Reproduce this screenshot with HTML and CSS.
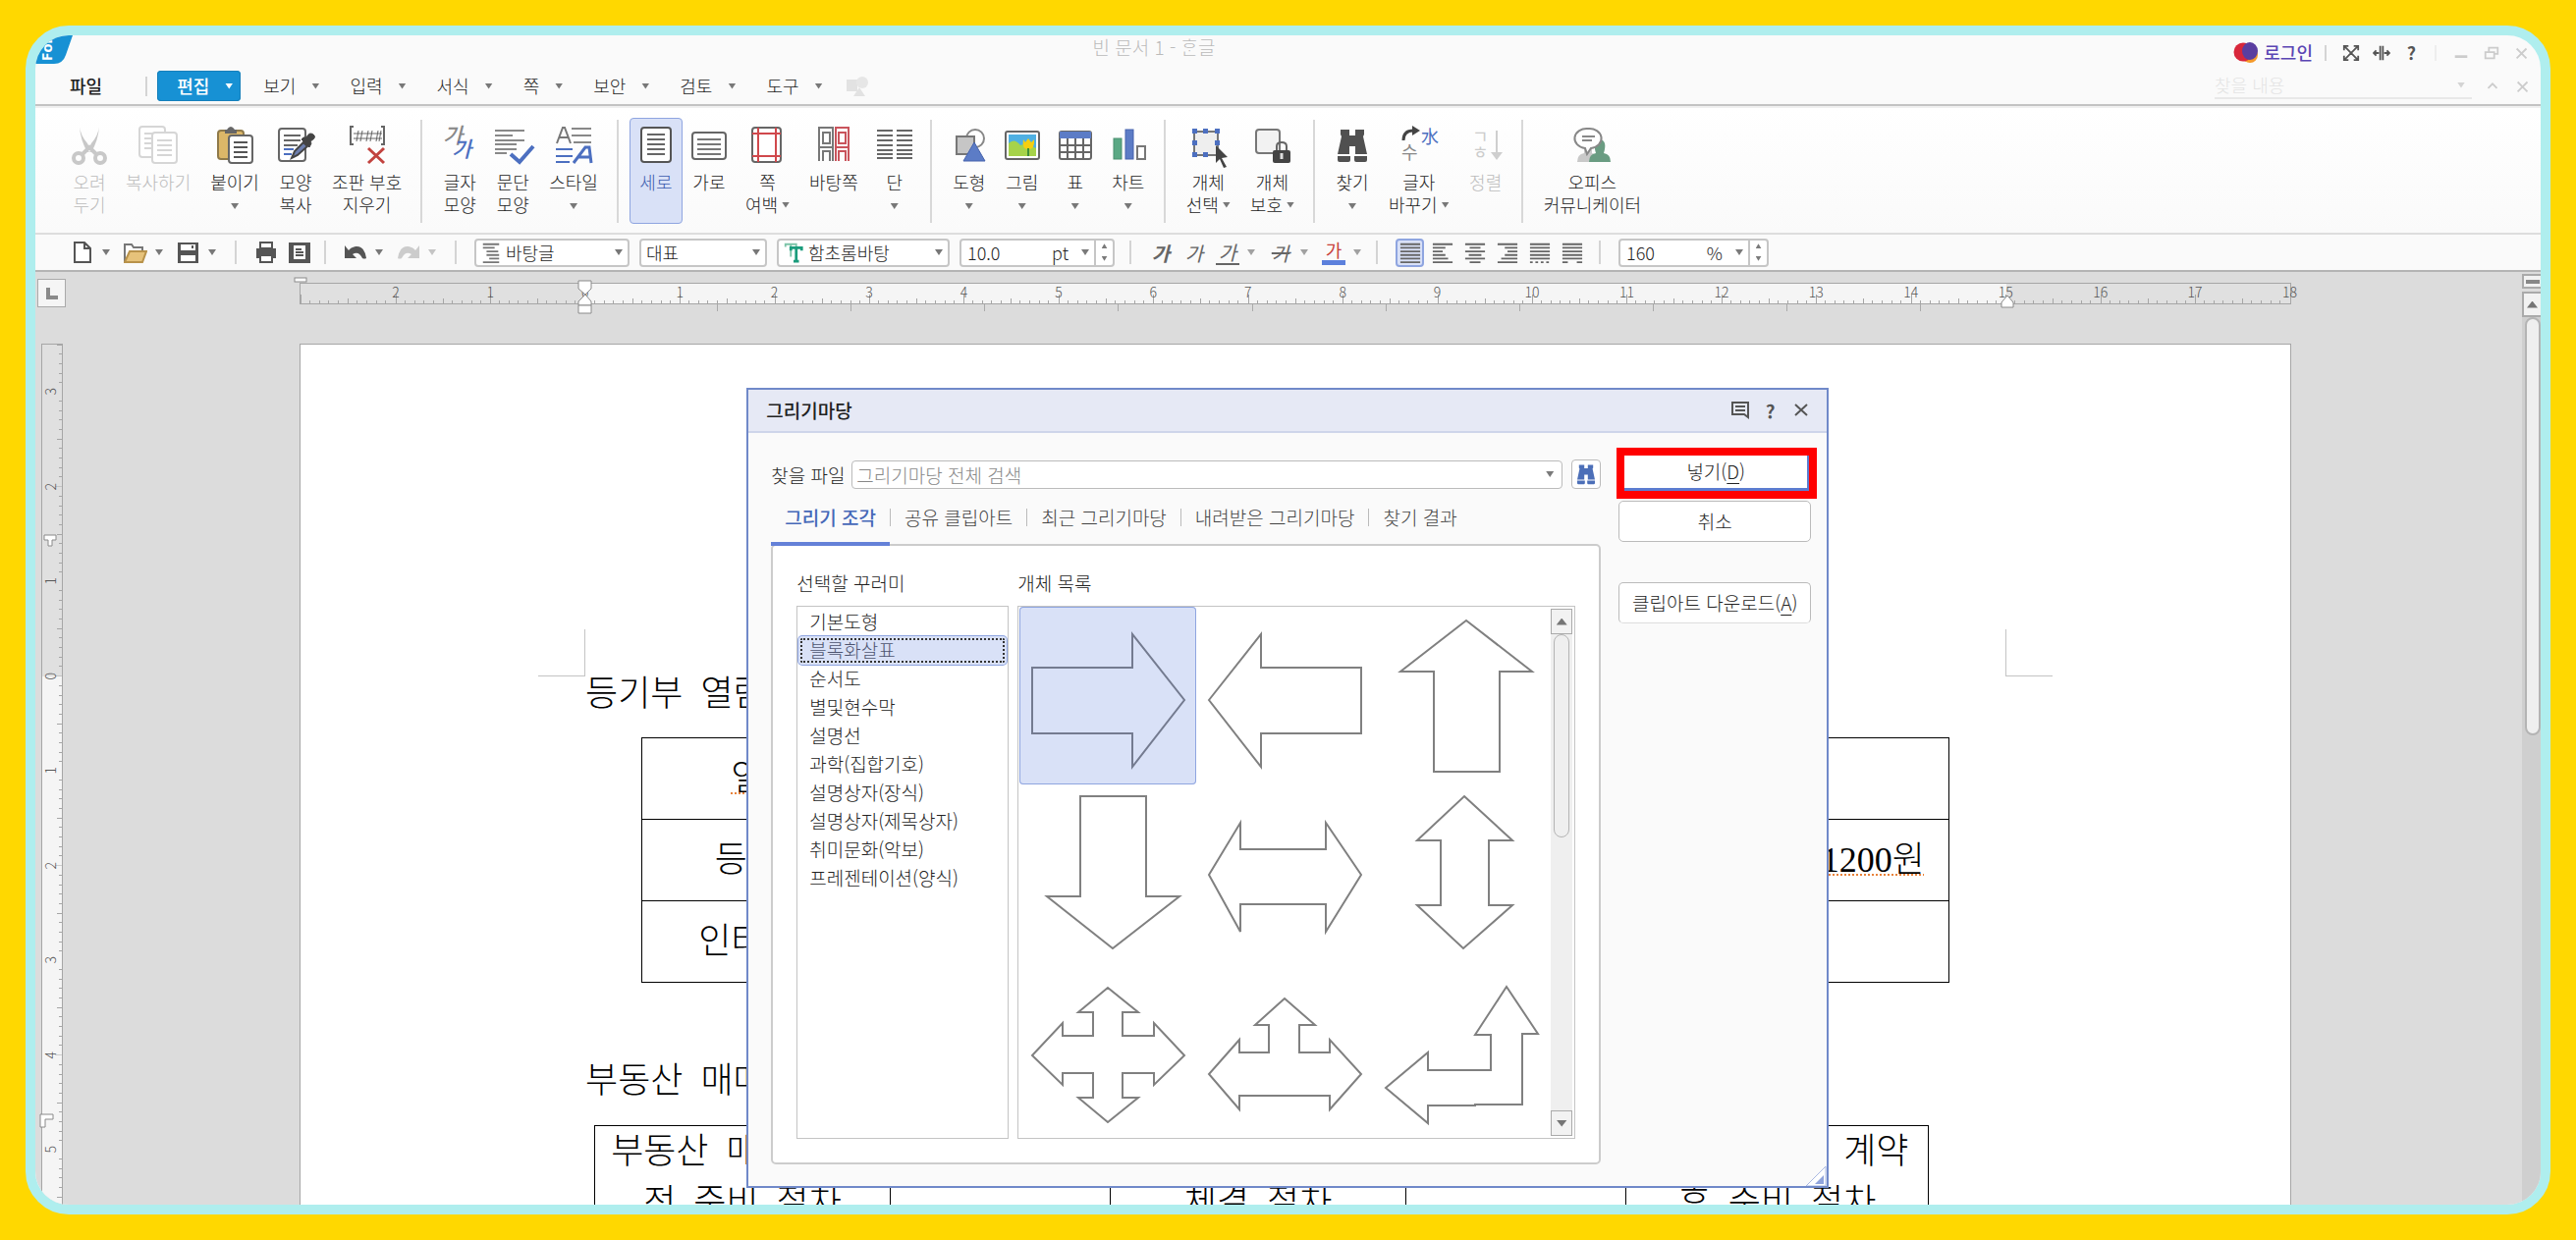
FILE: index.html
```html
<!DOCTYPE html>
<html lang="ko">
<head>
<meta charset="utf-8">
<title>빈 문서 1 - ᄒᆞᆫ글</title>
<link rel="stylesheet" href="styles.css">
</head>
<body>
<svg class="defs" aria-hidden="true">
  <symbol id="cm-x">
    <g stroke="#a6a6a6" shape-rendering="crispEdges">
      <line x1="0" x2="0" y1="11" y2="22"/>
      <line x1="10%" x2="10%" y1="17" y2="22"/><line x1="20%" x2="20%" y1="17" y2="22"/>
      <line x1="30%" x2="30%" y1="17" y2="22"/><line x1="40%" x2="40%" y1="17" y2="22"/>
      <line x1="50%" x2="50%" y1="15" y2="22"/>
      <line x1="60%" x2="60%" y1="17" y2="22"/><line x1="70%" x2="70%" y1="17" y2="22"/>
      <line x1="80%" x2="80%" y1="17" y2="22"/><line x1="90%" x2="90%" y1="17" y2="22"/>
    </g>
  </symbol>
  <symbol id="cm-y">
    <g stroke="#a6a6a6" shape-rendering="crispEdges">
      <line y1="10%" y2="10%" x1="18" x2="22"/><line y1="20%" y2="20%" x1="18" x2="22"/>
      <line y1="30%" y2="30%" x1="18" x2="22"/><line y1="40%" y2="40%" x1="18" x2="22"/>
      <line y1="50%" y2="50%" x1="16" x2="22"/>
      <line y1="60%" y2="60%" x1="18" x2="22"/><line y1="70%" y2="70%" x1="18" x2="22"/>
      <line y1="80%" y2="80%" x1="18" x2="22"/><line y1="90%" y2="90%" x1="18" x2="22"/>
      <line y1="100%" y2="100%" x1="14" x2="22"/>
    </g>
  </symbol>
  <symbol id="binoculars" viewBox="0 0 36 40">
    <path d="M6 4h9v6h6V4h9v5l-1 2 4 18H21v-8h-6v8H3l4-18-1-2zM3 31h13v4q0 2-2 2H5q-2 0-2-2zM20 31h13v4q0 2-2 2h-9q-2 0-2-2z" fill="currentColor"/>
  </symbol>
</svg>

<div class="app">
  <header class="header">
    <div class="titlebar">
      <svg class="badge" viewBox="0 0 38 29"><path d="M0 0h38l-7 20q-3 9-12 9H0z" fill="#1791d4"/><text class="badge-text" transform="translate(17 26) rotate(-90)">For</text></svg>
      <h1 class="doc-title">빈 문서 1 - ᄒᆞᆫ글</h1>
      <div class="window-tools">
        <a class="login" href="#login"><svg width="26" height="22" viewBox="0 0 26 22"><circle cx="17" cy="13" r="8" fill="#f59a2a"/><circle cx="10" cy="10" r="9.500" fill="#d8273b"/><ellipse cx="17" cy="9" rx="8" ry="9" fill="#5a3ea0"/></svg>로그인</a>
        <i class="bar"></i>
        <button class="mini dark" aria-label="전체 화면"><svg viewBox="0 0 20 20"><path d="M3 3l14 14M17 3L3 17M2 7V2h5M13 2h5v5M18 13v5h-5M7 18H2v-5" /></svg></button>
        <button class="mini dark" aria-label="폭 맞춤"><svg viewBox="0 0 20 20"><path d="M8.500 2v16M11.500 2v16M1 10h6M13 10h6M4 7l-3 3 3 3M16 7l3 3-3 3"/></svg></button>
        <button class="mini dark" aria-label="도움말"><b>?</b></button>
        <i class="bar pale"></i>
        <button class="mini" aria-label="최소화"><svg viewBox="0 0 20 20"><path d="M3 14h14" stroke-width="3"/></svg></button>
        <button class="mini" aria-label="이전 크기로"><svg viewBox="0 0 20 20"><path d="M3 9h10v7H3zM7 8V4h10v7h-3" stroke-width="2"/></svg></button>
        <button class="mini" aria-label="닫기"><svg viewBox="0 0 20 20"><path d="M4 5l11 11M15 5L4 16" stroke-width="2"/></svg></button>
      </div>
    </div>
    <nav class="menubar">
      <button class="menu file">파일</button>
      <i class="bar"></i>
      <button class="menu active">편집<i class="caret"></i></button>
      <button class="menu">보기<i class="caret"></i></button>
      <button class="menu">입력<i class="caret"></i></button>
      <button class="menu">서식<i class="caret"></i></button>
      <button class="menu">쪽<i class="caret"></i></button>
      <button class="menu">보안<i class="caret"></i></button>
      <button class="menu">검토<i class="caret"></i></button>
      <button class="menu">도구<i class="caret"></i></button>
      <svg class="ghost" width="24" height="22" viewBox="0 0 24 22"><path d="M1 4h11v12H1zM14 12l6 9H8z" fill="#e2e2e2"/><circle cx="17" cy="7" r="6" fill="#e6e6e6"/></svg>
      <div class="find"><input aria-label="찾을 내용" placeholder="찾을 내용"><i class="caret"></i></div>
      <button class="mini" aria-label="접기"><svg viewBox="0 0 20 20"><path d="M5 12l5-5 5 5" stroke-width="2"/></svg></button>
      <button class="mini" aria-label="문서 닫기"><svg viewBox="0 0 20 20"><path d="M4 5l11 11M15 5L4 16" stroke-width="2"/></svg></button>
    </nav>
  </header>

  <section class="ribbon">
    <div class="group">
      <button class="cmd off"><svg viewBox="0 0 36 40"><path d="M8 1q1 9 8 17l4 8-4 1Q9 15 8 1zM28 1q-1 9-8 17l-4 8 4 1Q27 15 28 1z" fill="#c8c8c8"/><g fill="none" stroke="#c8c8c8" stroke-width="4"><circle cx="7" cy="33" r="5"/><circle cx="29" cy="33" r="5"/><path d="M11 29l7-7 7 7"/></g></svg><span>오려</span><span>두기</span></button>
      <button class="cmd off"><svg viewBox="0 0 36 40"><g fill="#fff" stroke="#d6d6d6" stroke-width="2"><rect x="-1" y="1" width="26" height="31" rx="3"/><path d="M4 8h10M4 13h8M4 18h8M4 23h8"/><rect x="12" y="7" width="25" height="31" rx="3"/><path d="M17 15h15M17 20h15M17 25h15M17 30h15"/></g></svg><span>복사하기</span></button>
      <button class="cmd"><svg viewBox="0 0 36 40"><rect x="1" y="5" width="26" height="29" rx="3" fill="#dcb768" stroke="#8f7a4a" stroke-width="2"/><path d="M8 4h2q4-6 8 0h2v4H8z" fill="#666"/><rect x="12" y="10" width="24" height="28" rx="3" fill="#fff" stroke="#666" stroke-width="2"/><path d="M17 17h14M17 22h14M17 27h14M17 32h14" stroke="#555" stroke-width="2"/></svg><span>붙이기</span><i class="caret"></i></button>
      <button class="cmd"><svg viewBox="0 0 36 40"><rect x="1" y="3" width="27" height="33" rx="3" fill="#fff" stroke="#666" stroke-width="2"/><path d="M6 10h17M6 15h17M6 20h14" stroke="#666" stroke-width="2"/><path d="M6 24h10M6 29h8" stroke="#4c6fc0" stroke-width="2"/><path d="M14 33l3-7 9-9 4 4-10 9z" fill="#6d7fae" stroke="#444" stroke-width="2"/><path d="M24 14l8 8 2-4-1-2q7-4 3-7t-7 3l-3 0z" fill="#444" stroke="#444"/></svg><span>모양</span><span>복사</span></button>
      <button class="cmd"><svg viewBox="0 0 36 40"><g fill="none" stroke="#666" stroke-width="2"><path d="M4 1H1v18h3M32 1h3v18h-3"/><path d="M4 8h29M4 13h29M9 5L7 16M13 5l-2 11M19 5l-2 11M23 5l-2 11M29 5l-2 11M32 5l-2 11" stroke-width="1"/></g><path d="M19 23l16 15M35 23L19 38" stroke="#c2433f" stroke-width="3"/></svg><span>조판 부호</span><span>지우기</span></button>
    </div>
    <div class="group">
      <button class="cmd"><svg viewBox="0 0 36 40"><text class="ic-ga grey" x="1" y="18">가</text><text class="ic-ga blue" x="10" y="32">가</text></svg><span>글자</span><span>모양</span></button>
      <button class="cmd"><svg viewBox="0 0 36 40"><path d="M0 5h30M0 10h18M0 15h30M0 19h22M0 24h22M0 28h12" stroke="#888" stroke-width="2"/><path d="M16 29l9 8 14-16" fill="none" stroke="#4c6fc0" stroke-width="4"/></svg><span>문단</span><span>모양</span></button>
      <button class="cmd"><svg viewBox="0 0 36 40"><path d="M1 18L7 2h2l6 16M4 12h9" fill="none" stroke="#777" stroke-width="2"/><path d="M16 3h20M16 10h20M18 17h18" stroke="#888" stroke-width="2"/><path d="M0 24h17M0 31h17M0 37h14" stroke="#4c6fc0" stroke-width="2"/><path d="M18 38l12-16h4l2 16M23 32h12" fill="none" stroke="#4c6fc0" stroke-width="3"/></svg><span>스타일</span><i class="caret"></i></button>
    </div>
    <div class="group">
      <button class="cmd on"><svg viewBox="0 0 36 40"><rect x="3" y="2" width="30" height="35" rx="3" fill="#fff" stroke="#555" stroke-width="2"/><path d="M9 9h18M9 14h18M9 19h18M9 24h18M9 29h18" stroke="#666" stroke-width="2"/></svg><span>세로</span></button>
      <button class="cmd"><svg viewBox="0 0 36 40"><rect x="1" y="7" width="34" height="27" rx="3" fill="#fff" stroke="#666" stroke-width="2"/><path d="M6 14h24M6 19h24M6 24h24M6 29h24" stroke="#777" stroke-width="2"/></svg><span>가로</span></button>
      <button class="cmd"><svg viewBox="0 0 36 40"><rect x="3" y="2" width="29" height="35" rx="3" fill="#fff" stroke="#666" stroke-width="2"/><path d="M9 2v35M27 2v35M3 8h29M3 31h29" stroke="#d0484c" stroke-width="2"/></svg><span>쪽</span><span>여백<i class="caret"></i></span></button>
      <button class="cmd"><svg viewBox="0 0 36 40"><g fill="none" stroke="#777" stroke-width="2"><path d="M3 36V2h14v34M7 7h7v11H7zM3 22h14M7 36V26h7v10"/><path d="M20 36V2h13v34M23 7h7v11h-7zM20 22h13M23 36V26h7v10" stroke="#c9545c"/></g></svg><span>바탕쪽</span></button>
      <button class="cmd"><svg viewBox="0 0 36 40"><path d="M0 5h16M20 5h16M0 10h16M20 10h16M0 15h16M20 15h16M0 20h16M20 20h16M0 25h16M20 25h16M0 29h16M20 29h16M0 33h16M20 33h16" stroke="#666" stroke-width="2"/></svg><span>단</span><i class="caret"></i></button>
    </div>
    <div class="group">
      <button class="cmd"><svg viewBox="0 0 36 40"><circle cx="24" cy="13" r="9" fill="#fff" stroke="#888" stroke-width="2"/><rect x="5" y="11" width="18" height="18" fill="#c6c6c6" stroke="#777" stroke-width="2"/><path d="M23 17l11 19H12z" fill="#5c7cc6" stroke="#4663ad"/></svg><span>도형</span><i class="caret"></i></button>
      <button class="cmd"><svg viewBox="0 0 36 40"><rect x="1" y="6" width="34" height="28" rx="2" fill="#fff" stroke="#666" stroke-width="2"/><path d="M4 9h28v22H4z" fill="#4fb0e2"/><path d="M4 18q6-6 12 2l6-2 10 5v8H4z" fill="#a6d34a"/><path d="M19 14l2 3 3-4 3 4 3-3q1 10-6 10t-5-10z" fill="#f6cf10"/><path d="M24 23v8" stroke="#3e8e37" stroke-width="2"/></svg><span>그림</span><i class="caret"></i></button>
      <button class="cmd"><svg viewBox="0 0 36 40"><rect x="2" y="6" width="32" height="28" rx="2" fill="#fff" stroke="#666" stroke-width="2"/><path d="M2 6h32v7H2z" fill="#5c7cc6"/><path d="M2 20h32M2 27h32M10 13v21M18 13v21M26 13v21" stroke="#666" stroke-width="2"/></svg><span>표</span><i class="caret"></i></button>
      <button class="cmd"><svg viewBox="0 0 36 40"><rect x="3" y="13" width="8" height="21" fill="#5aa884" stroke="#4b8f70"/><rect x="15" y="4" width="8" height="30" fill="#5c7cc6" stroke="#4663ad"/><rect x="27" y="21" width="8" height="13" fill="#fff" stroke="#777" stroke-width="2"/></svg><span>차트</span><i class="caret"></i></button>
    </div>
    <div class="group">
      <button class="cmd"><svg viewBox="0 0 36 40"><rect x="4" y="6" width="24" height="24" fill="#eee" stroke="#777" stroke-width="2"/><g fill="#4c6fc0"><path d="M2 3h5v5H2zM13 3h5v5h-5zM25 3h5v5h-5zM2 15h5v5H2zM25 15h5v5h-5zM2 27h5v5H2zM13 27h5v5h-5z"/></g><path d="M26 20l12 12-6 1 5 9-3 1-4-9-4 4z" fill="#444"/></svg><span>개체</span><span>선택<i class="caret"></i></span></button>
      <button class="cmd"><svg viewBox="0 0 36 40"><rect x="2" y="4" width="24" height="24" rx="3" fill="#f2f2f2" stroke="#777" stroke-width="2"/><path d="M23 26v-5q0-4 5-4t5 4v5" fill="none" stroke="#666" stroke-width="2"/><rect x="19" y="25" width="18" height="13" rx="2" fill="#444"/><path d="M28 28v6" stroke="#ddd" stroke-width="3"/></svg><span>개체</span><span>보호<i class="caret"></i></span></button>
    </div>
    <div class="group">
      <button class="cmd"><svg class="bino"><use href="#binoculars"/></svg><span>찾기</span><i class="caret"></i></button>
      <button class="cmd"><svg viewBox="0 0 36 40"><path d="M2 15q0-10 10-10" fill="none" stroke="#444" stroke-width="3"/><path d="M11 0l8 5-8 5z" fill="#444"/><text class="ic-small blue" x="20" y="18">水</text><text class="ic-small grey" x="0" y="34">수</text></svg><span>글자</span><span>바꾸기<i class="caret"></i></span></button>
      <button class="cmd off"><svg viewBox="0 0 36 40"><text class="ic-small faint" x="4" y="18">ㄱ</text><text class="ic-small faint" x="4" y="34">ㅎ</text><path d="M29 5v24" stroke="#cfcfcf" stroke-width="2"/><path d="M23 27h12l-6 8z" fill="#cfcfcf"/></svg><span>정렬</span></button>
    </div>
    <div class="group">
      <button class="cmd"><svg viewBox="0 0 36 40"><path d="M3 37q0-8 7-9v-6h8v6q6 1 6 9z" fill="#c9c9c9"/><path d="M15 37q0-8 7-9-4-13 4-14 8 1 4 14 7 1 7 9z" fill="#6a9c82"/><path d="M14 3a12 10 0 0 1 3 20l-4 6-2-6a12 10 0 0 1 3-20z" fill="#fff" stroke="#888" stroke-width="2"/><path d="M8 11h13M8 15h10" stroke="#888" stroke-width="2"/></svg><span>오피스</span><span>커뮤니케이터</span></button>
    </div>
  </section>

  <section class="toolbar">
    <button class="tool split" aria-label="새 문서"><svg viewBox="0 0 24 24"><path d="M4 2h10l6 6v14H4zM14 2v6h6" fill="#fff" stroke="#555" stroke-width="2"/></svg><i class="caret"></i></button>
    <button class="tool split" aria-label="불러오기"><svg viewBox="0 0 24 24"><path d="M1 22V4h7l2 3h9v5" fill="#fff" stroke="#777" stroke-width="2"/><path d="M1 22l5-11h17l-4 11z" fill="#e6c27a" stroke="#b8924a" stroke-width="2"/></svg><i class="caret"></i></button>
    <button class="tool split" aria-label="저장하기"><svg viewBox="0 0 24 24"><path d="M1 2h21v21H1z" fill="#555"/><path d="M4 4h15v6H4zM4 15h15v6H4z" fill="#fff"/><path d="M16 5v3" stroke="#555" stroke-width="2"/></svg><i class="caret"></i></button>
    <i class="bar"></i>
    <button class="tool" aria-label="인쇄"><svg viewBox="0 0 24 24"><path d="M6 2h12v6H6z" fill="#fff" stroke="#555" stroke-width="2"/><path d="M2 8h20v10H2z" fill="#555"/><path d="M6 15h12v7H6z" fill="#fff" stroke="#555" stroke-width="2"/></svg></button>
    <button class="tool preview" aria-label="미리 보기"><svg viewBox="0 0 24 24"><path d="M1 2h22v21H1z" fill="#555"/><path d="M6 5h12v14H6z" fill="#fff"/><path d="M8 9h6M8 12h8M8 15h8" stroke="#555" stroke-width="2"/></svg></button>
    <i class="bar"></i>
    <button class="tool split" aria-label="되돌리기"><svg viewBox="0 0 24 24"><path d="M1 5v13h12l-4-4q6-4 10 4 2 1 4 0Q21 5 12 6 7 7 5 10z" fill="#555"/></svg><i class="caret"></i></button>
    <button class="tool split redo" aria-label="다시 실행"><svg viewBox="0 0 24 24"><path d="M23 5v13H11l4-4q-6-4-10 4-2 1-4 0Q3 5 12 6q5 1 7 4z" fill="#ccc"/></svg><i class="caret"></i></button>
    <i class="bar"></i>
    <span class="combo styles"><svg viewBox="0 0 20 24"><path d="M1 3h18M1 7h13M5 11h13M5 15h14M8 19h11M1 23h18" stroke="#777" stroke-width="2"/></svg><select aria-label="스타일"><option>바탕글</option></select></span>
    <span class="combo lang"><select aria-label="언어"><option>대표</option></select></span>
    <span class="combo font"><svg viewBox="0 0 20 24"><path d="M1 6V3h12v3M7 3v14" fill="none" stroke="#7cc4a8" stroke-width="2"/><path d="M7 10V7h12v3M13 7v15M10 22h6" fill="none" stroke="#1a9c7c" stroke-width="3"/></svg><select aria-label="글꼴"><option>함초롬바탕</option></select></span>
    <span class="number size"><input aria-label="글자 크기" value="10.0"><span>pt</span><i class="caret"></i><span class="spin"><button aria-label="크게"><i class="caret up"></i></button><button aria-label="작게"><i class="caret"></i></button></span></span>
    <i class="bar"></i>
    <button class="tool gl bold">가</button>
    <button class="tool gl slant">가</button>
    <button class="tool gl split slant"><span class="under">가</span><i class="caret"></i></button>
    <button class="tool gl split slant"><span class="strike">가</span><i class="caret"></i></button>
    <button class="tool gl split color"><span>가</span><i class="caret"></i></button>
    <i class="bar"></i>
    <div class="aligns">
      <button class="on" aria-label="양쪽 정렬"><svg viewBox="0 0 24 24"><path d="M1 3h22M1 7h22M1 11h22M1 15h22M1 19h22M1 23h22"/></svg></button>
      <button aria-label="왼쪽 정렬"><svg viewBox="0 0 24 24"><path d="M1 3h22M1 7h14M1 11h11M1 15h14M1 19h17M1 23h22"/></svg></button>
      <button aria-label="가운데 정렬"><svg viewBox="0 0 24 24"><path d="M1 3h22M6 7h12M1 11h22M5 15h14M1 19h22M6 23h12"/></svg></button>
      <button aria-label="오른쪽 정렬"><svg viewBox="0 0 24 24"><path d="M1 3h22M9 7h14M12 11h11M9 15h14M5 19h18M1 23h22"/></svg></button>
      <button aria-label="배분 정렬"><svg viewBox="0 0 24 24"><path d="M1 3h22M1 7h22M1 11h22M1 15h22M1 19h22"/><path d="M1 23h22" stroke-dasharray="3 3"/></svg></button>
      <button aria-label="나눔 정렬"><svg viewBox="0 0 24 24"><path d="M1 3h22M1 7h22M1 11h22M1 15h22M1 19h22M1 23h6M17 23h6"/></svg></button>
    </div>
    <i class="bar"></i>
    <span class="number"><input aria-label="줄 간격" value="160"><span>%</span><i class="caret"></i><span class="spin"><button aria-label="늘리기"><i class="caret up"></i></button><button aria-label="줄이기"><i class="caret"></i></button></span></span>
  </section>

  <main class="work">
    <button class="tabstop" aria-label="탭 종류"><svg viewBox="0 0 14 14"><path d="M3 1v10h10" fill="none" stroke="#8a8a8a" stroke-width="4"/></svg></button>
    <div class="hruler">
      <div class="hscale">
        <div class="hticks">
          <svg><use href="#cm-x"/></svg><svg><use href="#cm-x"/></svg><svg><use href="#cm-x"/></svg><svg><use href="#cm-x"/></svg><svg><use href="#cm-x"/></svg><svg><use href="#cm-x"/></svg><svg><use href="#cm-x"/></svg><svg><use href="#cm-x"/></svg><svg><use href="#cm-x"/></svg><svg><use href="#cm-x"/></svg><svg><use href="#cm-x"/></svg><svg><use href="#cm-x"/></svg><svg><use href="#cm-x"/></svg><svg><use href="#cm-x"/></svg><svg><use href="#cm-x"/></svg><svg><use href="#cm-x"/></svg><svg><use href="#cm-x"/></svg><svg><use href="#cm-x"/></svg><svg><use href="#cm-x"/></svg><svg><use href="#cm-x"/></svg><svg><use href="#cm-x"/></svg>
        </div>
        <div class="hlabels"><span>2</span><span>1</span><span>0</span><span>1</span><span>2</span><span>3</span><span>4</span><span>5</span><span>6</span><span>7</span><span>8</span><span>9</span><span>10</span><span>11</span><span>12</span><span>13</span><span>14</span><span>15</span><span>16</span><span>17</span><span>18</span></div>
        <svg class="mark gutter" width="14" height="6"><rect x="1" y="1" width="12" height="4" fill="#fff" stroke="#8a8a8a"/></svg>
        <svg class="mark indent" width="16" height="36" viewBox="0 0 16 36"><g fill="#fff" stroke="#8a8a8a"><path d="M1 1h13v8l-6 6-7-6z"/><path d="M8 15l6 7v4H1v-4z"/><path d="M1 26h13v8H1z"/></g></svg>
        <svg class="mark end" width="14" height="14" viewBox="0 0 14 14"><path d="M7 1l6 7v5H1V8z" fill="#fff" stroke="#8a8a8a"/></svg>
      </div>
      <div class="tabs-row"><i></i><i></i><i></i><i></i><i></i><i></i><i></i><i></i><i></i><i></i></div>
    </div>
    <div class="vruler">
      <div class="vhead"><svg class="half"><use href="#cm-y"/></svg></div>
      <div class="vcell out"><svg><use href="#cm-y"/></svg></div>
      <div class="vcell out"><svg><use href="#cm-y"/></svg></div>
      <div class="vcell out"><svg><use href="#cm-y"/></svg></div>
      <div class="vcell"><svg><use href="#cm-y"/></svg></div>
      <div class="vcell"><svg><use href="#cm-y"/></svg></div>
      <div class="vcell"><svg><use href="#cm-y"/></svg></div>
      <div class="vcell"><svg><use href="#cm-y"/></svg></div>
      <div class="vcell"><svg><use href="#cm-y"/></svg></div>
      <div class="vcell"><svg><use href="#cm-y"/></svg></div>
      <div class="vlabels"><span>3</span><span>2</span><span>1</span><span>0</span><span>1</span><span>2</span><span>3</span><span>4</span><span>5</span></div>
      <svg class="mark vtop" width="14" height="13" viewBox="0 0 14 13"><path d="M1 1h12v5H9v6H5V6H1z" fill="#fff" stroke="#8a8a8a"/></svg>
      <svg class="mark vbottom" width="15" height="15" viewBox="0 0 15 15"><path d="M1 1h13v5H6v8H1z" fill="#fff" stroke="#8a8a8a"/></svg>
    </div>
    <div class="canvas">
      <article class="page">
        <i class="crop crop-left"></i><i class="crop crop-right"></i>
        <p class="line">등기부&ensp;열람</p>
        <table class="fees">
          <tr><td><span class="typo">열람</span></td><td></td></tr>
          <tr><td>등기소</td><td class="fee"><span class="typo">1200원</span></td></tr>
          <tr><td>인터넷용</td><td></td></tr>
        </table>
        <p class="line">부동산&ensp;매매</p>
        <table class="steps">
          <colgroup><col class="c1"><col class="gapcol"><col class="c3"><col class="gapcol"><col></colgroup>
          <tr><td>부동산&ensp;매매&ensp;계약<br>전&ensp;준비&ensp;절차</td><td></td><td>부동산&ensp;계약<br>체결&ensp;절차</td><td></td><td>부동산&ensp;매매&ensp;계약<br>후&ensp;준비&ensp;절차</td></tr>
        </table>
      </article>
    </div>
    <div class="vscroll">
      <button class="divide" aria-label="창 나누기"></button>
      <button class="step" aria-label="위로"><i class="caret up big"></i></button>
      <div class="thumb"></div>
    </div>
  </main>

  <section class="dialog" role="dialog" aria-labelledby="dlg-title">
    <header class="dlg-head">
      <h2 id="dlg-title">그리기마당</h2>
      <button class="mini dark" aria-label="설명"><svg viewBox="0 0 20 20"><path d="M2 3h16v15l-4-3H2zM5 7h10M5 11h10"/></svg></button>
      <button class="mini dark" aria-label="도움말"><b>?</b></button>
      <button class="mini dark" aria-label="닫기"><svg viewBox="0 0 20 20"><path d="M4 5l12 11M16 5L4 16"/></svg></button>
    </header>
    <div class="dlg-body">
      <div class="dlg-main">
        <div class="search">
          <label for="q">찾을 파일</label>
          <span class="search-box"><input id="q" placeholder="그리기마당 전체 검색"><i class="caret"></i></span>
          <button class="search-go" aria-label="찾기"><svg><use href="#binoculars"/></svg></button>
        </div>
        <div class="tabs" role="tablist">
          <button role="tab" class="sel">그리기 조각</button><i class="bar"></i>
          <button role="tab">공유 클립아트</button><i class="bar"></i>
          <button role="tab">최근 그리기마당</button><i class="bar"></i>
          <button role="tab">내려받은 그리기마당</button><i class="bar"></i>
          <button role="tab">찾기 결과</button>
        </div>
        <div class="panel">
          <div class="pack">
            <h3>선택할 꾸러미</h3>
            <ul class="list">
              <li>기본도형</li><li class="sel">블록화살표</li><li>순서도</li><li>별및현수막</li><li>설명선</li><li>과학(집합기호)</li><li>설명상자(장식)</li><li>설명상자(제목상자)</li><li>취미문화(악보)</li><li>프레젠테이션(양식)</li>
            </ul>
          </div>
          <div class="objects">
            <h3>개체 목록</h3>
            <div class="objbox">
              <div class="shapes">
                <button class="sel" aria-label="오른쪽 화살표"><svg viewBox="0 0 180 181"><path d="M13 62H115V28L168 95 115 163V129H13z"/></svg></button>
                <button aria-label="왼쪽 화살표"><svg viewBox="0 0 180 181"><path d="M13 95L66 28V62H168V129H66V163z"/></svg></button>
                <button aria-label="위쪽 화살표"><svg viewBox="0 0 180 181"><path d="M95 14L162 66H129V168H62V66H28z"/></svg></button>
                <button aria-label="아래쪽 화살표"><svg viewBox="0 0 180 181"><path d="M62 12H129V114H163L95 167 28 114H62z"/></svg></button>
                <button aria-label="좌우 화살표"><svg viewBox="0 0 180 181"><path d="M13 92L45 39V66H132V39L168 92 132 150V122H45V150z"/></svg></button>
                <button aria-label="상하 화살표"><svg viewBox="0 0 180 181"><path d="M93 12L142 57H118V123H142L92 167 45 123H69V57H45z"/></svg></button>
                <button aria-label="사방 화살표"><svg viewBox="0 0 180 181"><path d="M90 26L121 51H105V75H137V62L168 95 137 125V113H105V138H121L90 163 60 138H75V113H44V125L13 95 44 62V75H75V51H60z"/></svg></button>
                <button aria-label="세 방향 화살표"><svg viewBox="0 0 180 181"><path d="M90 37L121 64H105V92H136V79L168 114 136 150V136H44V150L13 114 44 79V92H74V64H60z"/></svg></button>
                <button aria-label="꺾인 화살표"><svg viewBox="0 0 180 181"><path d="M136 25L168 73H152V145H104V146H56V164L13 128 56 92V110H120V74H104z"/></svg></button>
              </div>
              <div class="objscroll"><button aria-label="위로"><i class="caret up big"></i></button><div class="thumb"></div><button aria-label="아래로"><i class="caret big"></i></button></div>
            </div>
          </div>
        </div>
      </div>
      <div class="dlg-side">
        <div class="callout"><button class="primary">넣기(<u>D</u>)</button></div>
        <button class="push">취소</button>
        <button class="push download">클립아트 다운로드(<u>A</u>)</button>
      </div>
    </div>
    <svg class="grip" width="22" height="20" viewBox="0 0 22 20"><path d="M1 20L21 0v20z" fill="#fff" stroke="#a9b8e2"/><path d="M10 18l9-9v9z" fill="#90a4dc"/></svg>
  </section>
</div>
</body>
</html>
```
FILE: styles.css
```css
* { box-sizing: border-box; }
:root { --cm: 3.68vw; }
html, body { height: 100%; }
body {
  margin: 0;
  padding: 26px;
  background: #ffd800;
  color: #222;
  font: 300 18px/23px "Noto Sans CJK KR", sans-serif;
  overflow: hidden;
}
h1, h2, h3, p, ul { margin: 0; padding: 0; font: inherit; }
ul { list-style: none; }
button, input, select {
  margin: 0; padding: 0; border: 0; background: none;
  font: inherit; color: inherit; outline: 0; min-width: 0;
}
select { appearance: none; }
.defs { position: absolute; width: 0; height: 0; }

.app {
  position: relative;
  display: flex;
  flex-direction: column;
  height: 100%;
  border: 10px solid #afeeee;
  border-radius: 44px;
  background: #fafafa;
  overflow: hidden;
}

.caret {
  display: inline-block;
  flex: none;
  width: 8px; height: 6px;
  background: currentColor;
  opacity: .6;
  clip-path: polygon(0 0, 100% 0, 50% 100%);
}
.caret.up { clip-path: polygon(50% 0, 100% 100%, 0 100%); }
.caret.big { width: 11px; height: 7px; }
.bar { flex: none; width: 2px; height: 20px; background: #d4d4d4; }
.mini {
  display: flex; align-items: center; justify-content: center;
  width: 31px; height: 24px; color: #ccc;
}
.mini svg { width: 18px; height: 18px; fill: none; stroke: currentColor; stroke-width: 2; }
.mini.dark { color: #555; }
.mini b { font-weight: 700; }

/* title and menus */
.header { flex: none; border-bottom: 2px solid #c3c3c3; }
.titlebar {
  display: grid;
  grid-template-columns: 1fr auto 1fr;
  height: 35px;
}
.badge { width: 38px; height: 29px; }
.badge-text { font: 700 15px "Noto Sans", sans-serif; fill: #fff; }
.doc-title { color: #bbb; padding-right: 273px; font-size: 19px; line-height: 24px; }
.window-tools { display: flex; align-items: center; justify-content: flex-end; padding-right: 4px; }
.login { display: flex; align-items: center; gap: 5px; color: #5a46b4; font-weight: 500; text-decoration: none; margin-right: 12px; }
.window-tools .bar { height: 16px; margin-right: 9px; }
.window-tools .pale { margin-left: 8px; background: #eee; }
.menubar { display: flex; align-items: center; height: 35px; padding: 0 4px 2px 0; gap: 3px; }
.menu {
  display: flex; align-items: center; gap: 16px;
  height: 31px; padding: 0 8px 0 20px;
}
.file { padding: 0 41px 0 35px; font-weight: 500; }
.menubar > .bar { margin-right: 7px; }
.menu.active { background: #1791d4; color: #fff; font-weight: 500; border-radius: 4px; box-shadow: inset 0 0 0 1px #1680bb; }
.menu.active .caret { opacity: 1; }
.ghost { margin-left: 12px; }
.find { display: flex; align-items: center; width: 262px; height: 26px; margin: 0 4px 0 auto; padding-right: 7px; border-bottom: 2px solid #e8e8e8; color: #bbb; }
.find input { flex: 1; }
.find input::placeholder { color: #e4e4e4; opacity: 1; }
.menubar .mini { width: 28px; }

/* ribbon */
.ribbon {
  flex: none;
  display: flex;
  padding: 10px 28px 9px;
  border-top: 2px solid #f0f0f0;
  border-bottom: 2px solid #ddd;
  background: linear-gradient(#fff, #fafafa);
}
.group { display: flex; padding-right: 9px; }
.group + .group { padding-left: 13px; background: linear-gradient(#d8d8d8, #d8d8d8) 0 2px / 2px 105px no-repeat; }
.cmd {
  display: flex; flex-direction: column; align-items: center;
  min-width: 54px; height: 108px; padding: 7px 9px 0;
  border: 1px solid transparent; border-radius: 4px;
  line-height: 23px; text-align: center; white-space: nowrap;
}
.cmd svg { width: 36px; height: 40px; margin: 0 -2px 6px; overflow: visible; flex: none; }
.cmd > .caret { margin-top: 10px; }
.cmd span { display: flex; align-items: center; gap: 4px; }
.cmd.off { color: #bbb; }
.cmd.on { background: #d9e1f7; border-color: #8fa5e0; color: #3c5cae; }
.cmd .bino { color: #505050; }
.ic-ga { font-size: 22px; font-style: italic; font-weight: 500; }
.ic-small { font-size: 18px; font-weight: 400; }
.grey { fill: #888; } .blue { fill: #4c6fc0; } .faint { fill: #ccc; }

/* formatting bar */
.toolbar {
  flex: none;
  display: flex; align-items: center;
  height: 38px; padding-left: 36px;
  border-bottom: 2px solid #b4b4b4;
  background: #fafafa;
}
.toolbar > .bar { height: 24px; margin: 0 18px 0 5px; }
.tool { display: flex; align-items: center; flex: none; width: 24px; height: 28px; margin-right: 10px; }
.tool svg { width: 24px; height: 24px; flex: none; }
.tool.split { width: 54px; gap: 8px; margin-right: 0; }
.tool.preview { margin-right: 8px; }
.redo .caret { opacity: .25; }
.combo, .number {
  display: flex; align-items: center; flex: none;
  height: 29px; margin-right: 10px;
  border: 2px solid #c6c6c6; border-radius: 4px; background: #fff;
}
.combo { padding-left: 5px; gap: 5px; position: relative; }
.combo::after {
  content: ""; position: absolute; right: 5px; width: 8px; height: 6px;
  background: #777; clip-path: polygon(0 0, 100% 0, 50% 100%);
}
.combo svg { width: 20px; height: 22px; flex: none; }
.combo select { flex: 1; height: 25px; }
.styles { width: 158px; } .lang { width: 130px; } .font { width: 176px; }
.number { width: 153px; margin: 0; padding-left: 6px; }
.number.size { width: 158px; margin-right: 10px; }
.number input { flex: 1; width: 20px; height: 25px; }
.number > .caret { margin: 0 5px 0 13px; }
.spin { display: flex; flex-direction: column; width: 19px; height: 25px; border-left: 2px solid #c6c6c6; }
.spin button { display: flex; align-items: center; justify-content: center; flex: 1; }
.spin .caret { width: 6px; height: 5px; }
.gl { justify-content: center; font-size: 20px; font-weight: 400; color: #666; }
.gl.split { justify-content: flex-start; }
.gl.split span { width: 24px; text-align: center; }
.bold { font-weight: 700; font-style: italic; }
.slant { font-style: italic; }
.under { border-bottom: 2px solid #666; }
.strike { text-decoration: line-through; }
.tool.color { width: 50px; }
.color span { color: #c8403c; line-height: 21px; border-bottom: 5px solid #5c80dc; font-size: 18px; }
.aligns { display: flex; gap: 4px; margin-right: 8px; }
.aligns button { width: 29px; height: 29px; border: 2px solid transparent; border-radius: 4px; display: flex; align-items: center; justify-content: center; }
.aligns svg { width: 22px; height: 24px; flex: none; stroke: #666; stroke-width: 2; }
.aligns .on { background: #d9e1f7; border-color: #8fa5e0; }

/* work area */
.work {
  flex: 1; min-height: 0;
  display: grid;
  grid-template-columns: 34px 1fr 19px;
  grid-template-rows: 73px 1fr;
  background: #dcdcdc;
  overflow: hidden;
}
.tabstop { width: 29px; height: 29px; margin: 7px 0 0 2px; border: 1px solid #aaa; background: #f5f5f5; }
.tabstop svg { width: 14px; height: 14px; }
.hruler { width: calc(var(--cm) * 21); margin: 11px auto 0; }
.hscale {
  position: relative; display: grid; height: 22px;
  border: 1px solid #a6a6a6;
  background: linear-gradient(90deg, #e0e0e0 14.286%, #f5f5f5 14.286% 85.714%, #e0e0e0 85.714%);
}
.hticks, .hlabels { grid-area: 1 / 1; display: grid; grid-template-columns: repeat(21, 1fr); min-width: 0; }
.hticks svg { width: 100%; height: 20px; }
.hlabels { margin: 0 -2.381% 0 2.381%; font-size: 14px; line-height: 16px; text-align: center; color: #555; }
.mark { position: absolute; }
.gutter { left: -7px; top: -7px; }
.indent { left: calc(var(--cm) * 3 - 8px); top: -4px; }
.end { left: calc(var(--cm) * 18 - 7px); top: 11px; }
.tabs-row { display: flex; height: 7px; padding-left: calc(var(--cm) * 3); }
.tabs-row i { flex: none; width: calc(var(--cm) * 1.41); border-right: 1px solid #aaa; }
.vruler { position: relative; grid-row: 2; width: 22px; margin-left: 6px; border: 1px solid #a6a6a6; border-bottom: 0; background: #f5f5f5; min-height: 0; height: 100%; }
.vruler svg { display: block; width: 22px; height: 100%; margin-left: -1px; }
.vcell { height: var(--cm); }
.vhead { height: calc(var(--cm) / 2); overflow: hidden; display: flex; align-items: flex-end; }
.vhead, .out { background: #e0e0e0; }
.vhead .half { height: var(--cm); flex: none; }
.vlabels { position: absolute; left: 0; top: 0; width: 16px; font-size: 14px; color: #555; }
.vlabels span { display: flex; align-items: center; justify-content: center; height: var(--cm); writing-mode: vertical-rl; transform: rotate(180deg); line-height: 16px; width: 16px; }
.vruler .vtop { left: 1px; top: 193px; width: 14px; height: 13px; margin: 0; }
.vruler .vbottom { left: -3px; top: 783px; width: 15px; height: 15px; margin: 0; }
.canvas { min-height: 0; overflow: hidden; }
.page {
  position: relative;
  width: calc(var(--cm) * 21); height: calc(var(--cm) * 29);
  margin: 0 auto;
  padding: calc(var(--cm) * 7 / 2) calc(var(--cm) * 3) 0;
  border: 1px solid #a6a6a6; background: #fff;
  color: #000;
  font: 300 36px/36px "Liberation Serif", "Noto Sans CJK KR", serif;
}
.crop { position: absolute; top: calc(var(--cm) * 3); width: calc(var(--cm) / 2); height: calc(var(--cm) / 2); border-bottom: 1px solid #c4c4c4; }
.crop-left { left: calc(var(--cm) * 5 / 2); border-right: 1px solid #c4c4c4; }
.crop-right { right: calc(var(--cm) * 5 / 2); border-left: 1px solid #c4c4c4; }
.line { white-space: nowrap; }
.page table { border-collapse: collapse; table-layout: fixed; }
.page td { border: 1px solid #000; padding: 0; text-align: center; white-space: nowrap; }
.fees { width: calc(100% - 114px); margin: 26px 0 82px 57px; }
.fees td { height: 83px; }
.fees td:first-child { width: 248px; }
.page .fee { text-align: right; padding-right: 24px; }
.typo { text-decoration: underline dotted #e8823a 2px; text-underline-offset: 3px; }
.steps { width: calc(100% - 87px); margin: 27px 0 0 9px; line-height: 52px; }
.c1, .c3 { width: 301px; } .gapcol { width: 224px; }
.steps td { height: 160px; vertical-align: top; }
.vscroll { grid-area: 1 / 3 / 3 / 4; display: flex; flex-direction: column; background: linear-gradient(#dcdcdc 45px, #cfcfcf 45px); }
.vscroll button { border: 2px solid #aaa; border-right: 0; background: #f2f2f2; display: flex; align-items: center; justify-content: center; }
.divide { height: 15px; margin: 2px 0 3px; }
.divide::after { content: ""; width: 14px; height: 4px; background: #888; }
.step { height: 26px; }
.vscroll .thumb { margin-left: 3px; height: 426px; }
.thumb { background: #efefef; border: 2px solid #b4b4b4; border-radius: 8px; }

/* dialog */
.dialog {
  position: absolute; left: 28.39%; top: 359px;
  width: 1102px;
  border: 2px solid #7089c9;
  background: #fafafa;
  font-size: 19px;
}
.dlg-head { display: flex; align-items: center; height: 44px; padding: 0 11px 2px 18px; background: #e6e9f5; border-bottom: 2px solid #ced5ea; }
.dlg-head h2 { flex: 1; font-size: 19px; font-weight: 500; }
.dlg-head .mini svg { width: 20px; height: 20px; }
.dlg-body { display: flex; gap: 16px; padding: 15px 10px 22px 23px; }
.dlg-main { flex: 1; min-width: 0; padding-top: 12px; }
.search { display: flex; align-items: center; }
.search label { width: 82px; }
.search-box { display: flex; align-items: center; flex: 1; height: 29px; padding: 0 8px 0 4px; border: 1px solid #bbb; border-radius: 4px; background: #fff; }
.search-box input { flex: 1; height: 26px; }
.search-box input::placeholder { color: #888; opacity: 1; }
.search-go { display: flex; align-items: center; justify-content: center; width: 30px; height: 30px; margin-left: 9px; border: 1px solid #bbb; border-radius: 4px; background: #fff; color: #4c6fb8; }
.search-go svg { width: 22px; height: 24px; }
.tabs { display: flex; align-items: center; height: 58px; color: #444; }
.tabs button { height: 100%; padding: 4px 14px 0; border-bottom: 4px solid transparent; line-height: 50px; position: relative; z-index: 1; }
.tabs .sel { color: #4668b8; font-weight: 500; border-color: #6481d8; }
.tabs .bar { height: 18px; width: 1px; background: #bbb; }
.panel { display: flex; gap: 9px; height: 632px; margin-top: -2px; padding: 26px 24px 24px; border: 2px solid #ccc; border-radius: 5px; background: #fff; }
.pack { width: 216px; }
.objects { flex: 1; min-width: 0; }
.panel h3 { line-height: 23px; margin-bottom: 12px; }
.list, .objbox { height: 543px; border: 1px solid #c4c4c4; }
.list { padding: 1px; }
.list li { height: 29px; padding: 0 11px; line-height: 28px; white-space: nowrap; }
.list .sel { background: #d9e1f7; border-radius: 4px; box-shadow: 0 0 0 1px #8fa5e0; outline: 2px dotted #333; outline-offset: -4px; color: #4d5470; }
.objbox { display: flex; justify-content: space-between; padding: 0 2px 0 1px; }
.shapes { display: grid; grid-template-columns: repeat(3, 180px); grid-auto-rows: 181px; width: 540px; overflow: hidden; }
.shapes button { border-radius: 4px; }
.shapes .sel { background: #d9e1f7; box-shadow: inset 0 0 0 1px #8fa5e0; }
.shapes svg { display: block; width: 180px; height: 181px; fill: none; stroke: #808080; stroke-width: 2; }
.shapes .sel path { stroke: #747b90; }
.objscroll { display: flex; flex-direction: column; width: 22px; background: #efefef; margin: 2px 0; flex: none; }
.objscroll button { display: flex; align-items: center; justify-content: center; height: 26px; border: 1px solid #aaa; background: #f2f2f2; flex: none; }
.objscroll .thumb { height: 207px; margin: 0 3px auto; border-width: 1px; }
.dlg-side { width: 204px; flex: none; }
.callout { border: 8px solid #f00; height: 52px; }
.callout button { display: block; width: 100%; height: 36px; padding-bottom: 2px; background: #fff; border: solid #5c7cd0; border-width: 0 2px 3px 0; }
.push { display: block; width: 196px; height: 42px; margin: 2px 0 0 2px; padding-bottom: 2px; border: 1px solid #bbb; border-radius: 5px; background: #fff; white-space: nowrap; }
.download { margin-top: 41px; border-bottom-color: #ddd; }
.dialog u { text-underline-offset: 4px; text-decoration-thickness: 1px; }
.grip { position: absolute; right: 0; bottom: 0; }
```
